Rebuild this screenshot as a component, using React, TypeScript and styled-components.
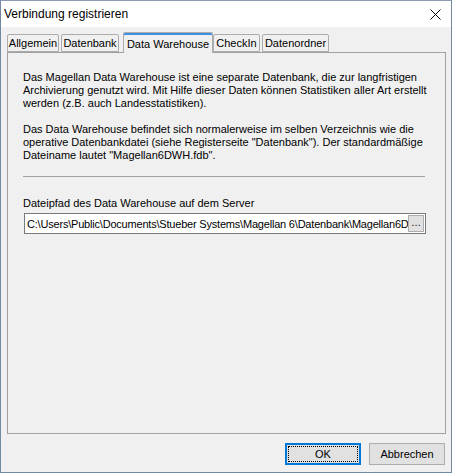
import React from "react";
import styled, { createGlobalStyle } from "styled-components";

const Global = createGlobalStyle`
  html, body { margin: 0; padding: 0; background: #f0f0f0; }
  body { font-family: "Liberation Sans", Arial, sans-serif; font-size: 11px; color: #000; }
  * { box-sizing: border-box; }
`;

const Window = styled.div`
  width: 452px;
  height: 473px;
  border: 1px solid #7388a2;
  border-top-color: #8a9cb3;
  background: #f0f0f0;
  display: flex;
  flex-direction: column;
`;

const TitleBar = styled.div`
  height: 26px;
  background: #fff;
  display: flex;
  align-items: center;
  justify-content: space-between;
  padding: 0 10px 0 3px;
`;

const Title = styled.div`
  font-family: "Liberation Sans", Arial, sans-serif;
  font-size: 12px;
  color: #000;
  padding-bottom: 1px;
`;

const CloseBtn = styled.div`
  width: 12px;
  height: 12px;
  display: flex;
  align-items: center;
  justify-content: center;
`;

const Body = styled.div`
  flex: 1;
  display: flex;
  flex-direction: column;
  padding: 4px 5px 0 6px;
`;

const TabStrip = styled.div`
  display: flex;
  align-items: flex-end;
  height: 21px;
  position: relative;
  z-index: 1;
`;

const Tab = styled.div<{ $active?: boolean; $w: number }>`
  width: ${(p) => p.$w}px;
  height: ${(p) => (p.$active ? 21 : 18)}px;
  margin-right: ${(p) => (p.$active ? 0 : 2)}px;
  margin-left: ${(p) => (p.$active ? 2 : 0)}px;
  margin-bottom: ${(p) => (p.$active ? -1 : 0)}px;
  border: 1px solid #acacac;
  border-bottom: ${(p) => (p.$active ? "none" : "1px solid #acacac")};
  border-radius: 2px 2px 0 0;
  background: #f0f0f0;
  display: flex;
  align-items: center;
  justify-content: center;
  padding-top: ${(p) => (p.$active ? 2 : 0)}px;
  box-shadow: ${(p) => (p.$active ? "inset 0 2px 0 #3f91e0" : "none")};
  white-space: nowrap;
`;

const Panel = styled.div`
  height: 382px;
  border: 1px solid #a0a0a0;
  background: #f0f0f0;
  padding: 18px 16px 0 15px;
  display: flex;
  flex-direction: column;
`;

const Para = styled.p`
  margin: 0;
  line-height: 13px;
`;

const Spacer = styled.div`
  height: 13px;
`;

const Separator = styled.div`
  height: 1px;
  background: #a0a0a0;
  margin: 14px 4px 20px 0;
`;

const Label = styled.div`
  line-height: 13px;
  margin-bottom: 3px;
`;

const InputBox = styled.div`
  width: 402px;
  height: 21px;
  margin-left: 1px;
  border: 1px solid #7a7a7a;
  background: #fff;
  display: flex;
  align-items: center;
  padding: 0 1px 0 2px;
`;

const InputText = styled.div`
  flex: 1;
  overflow: hidden;
  white-space: nowrap;
  letter-spacing: -0.2px;
`;

const Browse = styled.div`
  width: 16px;
  height: 17px;
  border: 1px solid #adadad;
  background: #e1e1e1;
  display: flex;
  align-items: center;
  justify-content: center;
  font-size: 10px;
  padding-bottom: 2px;
`;

const Footer = styled.div`
  display: flex;
  justify-content: flex-end;
  gap: 8px;
  padding: 9px 1px 0 0;
`;

const Button = styled.div<{ $default?: boolean }>`
  width: 76px;
  height: 22px;
  background: #e1e1e1;
  border: ${(p) => (p.$default ? "2px solid #0078d7" : "1px solid #adadad")};
  display: flex;
  align-items: center;
  justify-content: center;
  position: relative;
  font-size: 11px;
`;

const FocusRing = styled.div`
  position: absolute;
  inset: 1px;
  border: 1px dotted #000;
`;

const tabs = [
  { label: "Allgemein", w: 52 },
  { label: "Datenbank", w: 58 },
  { label: "Data Warehouse", w: 90, active: true },
  { label: "CheckIn", w: 47 },
  { label: "Datenordner", w: 67 },
];

export default function App() {
  return (
    <>
      <Global />
      <Window>
        <TitleBar>
          <Title>Verbindung registrieren</Title>
          <CloseBtn>
            <svg width="11" height="11" viewBox="0 0 11 11">
              <path d="M0.5 0.5 L10.5 10.5 M10.5 0.5 L0.5 10.5" stroke="#000" strokeWidth="1" />
            </svg>
          </CloseBtn>
        </TitleBar>
        <Body>
          <TabStrip>
            {tabs.map((t) => (
              <Tab key={t.label} $w={t.w} $active={t.active}>
                {t.label}
              </Tab>
            ))}
          </TabStrip>
          <Panel>
            <Para>
              Das Magellan Data Warehouse ist eine separate Datenbank, die zur langfristigen
              <br />
              Archivierung genutzt wird. Mit Hilfe dieser Daten können Statistiken aller Art erstellt
              <br />
              werden (z.B. auch Landesstatistiken).
            </Para>
            <Spacer />
            <Para>
              Das Data Warehouse befindet sich normalerweise im selben Verzeichnis wie die
              <br />
              operative Datenbankdatei (siehe Registerseite "Datenbank"). Der standardmäßige
              <br />
              Dateiname lautet "Magellan6DWH.fdb".
            </Para>
            <Separator />
            <Label>Dateipfad des Data Warehouse auf dem Server</Label>
            <InputBox>
              <InputText>
                C:\Users\Public\Documents\Stueber Systems\Magellan 6\Datenbank\Magellan6DWH.fdb
              </InputText>
              <Browse>…</Browse>
            </InputBox>
          </Panel>
          <Footer>
            <Button $default>
              <FocusRing />
              OK
            </Button>
            <Button>Abbrechen</Button>
          </Footer>
        </Body>
      </Window>
    </>
  );
}
